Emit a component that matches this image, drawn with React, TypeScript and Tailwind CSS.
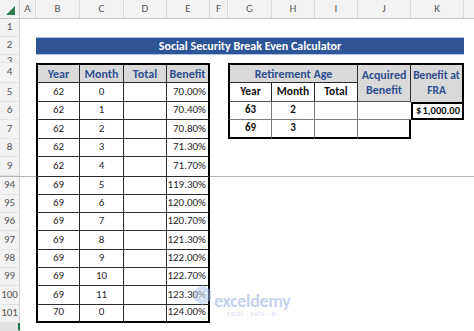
import type { ReactNode } from "react";

// column widths, matching the sheet's grid
const W = {
  A: "w-[16px]",
  B: "w-[44px]",
  C: "w-[44px]",
  D: "w-[43px]",
  E: "w-[43px]",
  F: "w-[18px]",
  G: "w-[44px]",
  H: "w-[43px]",
  I: "w-[43px]",
  J: "w-[53px]",
  K: "w-[53px]",
};

const HEAD_BG = "bg-[#d9d9d9]";
const HEAD_TEXT = "text-[#2f4f8f] font-bold";

type LeftRow = { year: number; month: number; benefit: string };

const topRows: LeftRow[] = [
  { year: 62, month: 1, benefit: "70.40%" },
  { year: 62, month: 2, benefit: "70.80%" },
  { year: 62, month: 3, benefit: "71.30%" },
  { year: 62, month: 4, benefit: "71.70%" },
];

const bottomRows: LeftRow[] = [
  { year: 69, month: 5, benefit: "119.30%" },
  { year: 69, month: 6, benefit: "120.00%" },
  { year: 69, month: 7, benefit: "120.70%" },
  { year: 69, month: 8, benefit: "121.30%" },
  { year: 69, month: 9, benefit: "122.00%" },
  { year: 69, month: 10, benefit: "122.70%" },
  { year: 69, month: 11, benefit: "123.30%" },
  { year: 70, month: 0, benefit: "124.00%" },
];

function RowHead({ n, active }: { n?: number; active?: boolean }) {
  return (
    <div
      className={`w-[20px] shrink-0 h-full flex items-center justify-center overflow-hidden border-b border-b-[#e2e2e2] text-[11px] text-[#555] ${
        active ? "bg-[#e1e1e1] border-r-2 border-r-[#217346]" : "bg-[#f3f3f3] border-r border-r-[#d0d0d0]"
      }`}
    >
      {n}
    </div>
  );
}

// one data row of the left table (columns B..E)
function LeftCells({ row, bottom }: { row: LeftRow; bottom: "thin" | "none" | "thick" }) {
  const b =
    bottom === "thin"
      ? "border-b border-b-[#2a2a2a]"
      : bottom === "thick"
        ? "border-b-2 border-b-black"
        : "";
  const base = `shrink-0 h-full flex items-center text-[11px] text-[#1f1f1f] ${b}`;
  return (
    <>
      <div className={`${W.B} ${base} justify-center border-l-2 border-l-black border-r border-r-[#2a2a2a]`}>
        {row.year}
      </div>
      <div className={`${W.C} ${base} justify-center border-r border-r-[#2a2a2a]`}>{row.month}</div>
      <div className={`${W.D} ${base} border-r border-r-[#2a2a2a]`} />
      <div className={`${W.E} ${base} justify-end pr-[2px] border-r-2 border-r-black`}>{row.benefit}</div>
    </>
  );
}

function Row({ h, children }: { h: string; children: ReactNode }) {
  return <div className={`flex shrink-0 ${h}`}>{children}</div>;
}

function Spacer({ w }: { w: string }) {
  return <div className={`${w} shrink-0 h-full`} />;
}

export default function App() {
  return (
    <div className="relative w-[474px] h-[331px] overflow-hidden bg-white flex flex-col font-[Carlito,Lato,sans-serif]">
      {/* column letters */}
      <div className="flex h-[19px] shrink-0 bg-[#f3f3f3] border-b border-b-[#c6c6c6] text-[11px] text-[#595959]">
        <div className="w-[20px] shrink-0 flex items-end justify-end pb-[3px] pr-[4px] border-r border-r-[#d0d0d0]">
          <svg width="9" height="9" viewBox="0 0 10 10">
            <polygon points="10,0 10,10 0,10" fill="#2e7d4f" />
          </svg>
        </div>
        {(["A", "B", "C", "D", "E", "F", "G", "H", "I", "J", "K"] as const).map((c) => (
          <div key={c} className={`${W[c]} shrink-0 flex items-center justify-center border-r border-r-[#dadada]`}>
            {c}
          </div>
        ))}
        <div className="flex-1" />
      </div>

      <Row h="h-[18px]">
        <RowHead n={1} />
      </Row>

      {/* title banner */}
      <Row h="h-[18px]">
        <RowHead n={2} />
        <Spacer w={W.A} />
        <div className="w-[428px] shrink-0 h-full flex items-center justify-center bg-[#2f5597] border-y border-y-[#a9c2e6] text-white font-bold text-[12px]">
          Social Security Break Even Calculator
        </div>
      </Row>

      <Row h="h-[8px]">
        <div className="w-[20px] shrink-0 h-full overflow-hidden bg-[#f3f3f3] border-r border-r-[#d0d0d0] border-b border-b-[#e2e2e2] text-[11px] leading-[11px] text-[#555] text-center">
          3
        </div>
      </Row>

      {/* rows 4 and 5: table headers, with merged J4:J5 and K4:K5 */}
      <div className="flex shrink-0">
        <div className="flex flex-col">
          <Row h="h-[20px]">
            <RowHead n={4} />
            <Spacer w={W.A} />
            {[
              { t: "Year", w: W.B, x: "border-l-2 border-l-black border-r border-r-[#2a2a2a]" },
              { t: "Month", w: W.C, x: "border-r border-r-[#2a2a2a]" },
              { t: "Total", w: W.D, x: "border-r border-r-[#2a2a2a]" },
              { t: "Benefit", w: W.E, x: "border-r-2 border-r-black" },
            ].map((c) => (
              <div
                key={c.t}
                className={`${c.w} shrink-0 h-full flex items-center justify-center ${HEAD_BG} ${HEAD_TEXT} text-[12px] border-t-2 border-t-black border-b border-b-[#2a2a2a] ${c.x}`}
              >
                {c.t}
              </div>
            ))}
            <Spacer w={W.F} />
            <div
              className={`w-[130px] shrink-0 h-full flex items-center justify-center ${HEAD_BG} ${HEAD_TEXT} text-[12px] border-t-2 border-t-black border-l-2 border-l-black border-r border-r-[#2a2a2a] border-b border-b-[#2a2a2a]`}
            >
              Retirement Age
            </div>
          </Row>
          <Row h="h-[18.5px]">
            <RowHead n={5} />
            <Spacer w={W.A} />
            <LeftCells row={{ year: 62, month: 0, benefit: "70.00%" }} bottom="thin" />
            <Spacer w={W.F} />
            <div className={`${W.G} shrink-0 h-full flex items-center justify-center font-bold text-[11.5px] text-[#111] border-l-2 border-l-black border-r border-r-[#2a2a2a] border-b border-b-[#555]`}>
              Year
            </div>
            <div className={`${W.H} shrink-0 h-full flex items-center justify-center font-bold text-[11.5px] text-[#111] border-r border-r-[#2a2a2a] border-b border-b-[#555]`}>
              Month
            </div>
            <div className={`${W.I} shrink-0 h-full flex items-center justify-center font-bold text-[11.5px] text-[#111] border-r border-r-[#2a2a2a] border-b border-b-[#555]`}>
              Total
            </div>
          </Row>
        </div>
        <div
          className={`${W.J} shrink-0 flex flex-col items-center justify-center leading-[15px] ${HEAD_BG} ${HEAD_TEXT} text-[12px] border-t-2 border-t-black border-r border-r-[#2a2a2a] border-b border-b-[#555]`}
        >
          <span>Acquired</span>
          <span>Benefit</span>
        </div>
        <div
          className={`${W.K} shrink-0 flex flex-col items-center justify-center leading-[15px] ${HEAD_BG} ${HEAD_TEXT} text-[11.5px] border-t-2 border-t-black border-r-2 border-r-black`}
        >
          <span>Benefit at</span>
          <span>FRA</span>
        </div>
      </div>

      {/* rows 6..9 */}
      {topRows.map((r, i) => (
        <Row key={i} h="h-[18.5px]">
          <RowHead n={6 + i} />
          <Spacer w={W.A} />
          <LeftCells row={r} bottom={i === 3 ? "none" : "thin"} />
          <Spacer w={W.F} />
          {i === 0 && (
            <>
              <div className={`${W.G} shrink-0 h-full flex items-center justify-center font-bold text-[11px] text-[#111] border-l-2 border-l-black border-r border-r-[#7a7a7a] border-b border-b-[#7a7a7a]`}>
                63
              </div>
              <div className={`${W.H} shrink-0 h-full flex items-center justify-center font-bold text-[11px] text-[#111] border-r border-r-[#7a7a7a] border-b border-b-[#7a7a7a]`}>
                2
              </div>
              <div className={`${W.I} shrink-0 h-full border-r border-r-[#7a7a7a] border-b border-b-[#7a7a7a]`} />
              <div className={`${W.J} shrink-0 h-full border-b border-b-[#7a7a7a]`} />
              <div className={`${W.K} shrink-0 h-full flex items-center justify-between pl-[3px] pr-[2px] font-bold text-[10.5px] text-[#111] border-2 border-black`}>
                <span>$</span>
                <span>1,000.00</span>
              </div>
            </>
          )}
          {i === 1 && (
            <>
              <div className={`${W.G} shrink-0 h-full flex items-center justify-center font-bold text-[11px] text-[#111] border-l-2 border-l-black border-r border-r-[#7a7a7a] border-b-2 border-b-black`}>
                69
              </div>
              <div className={`${W.H} shrink-0 h-full flex items-center justify-center font-bold text-[11px] text-[#111] border-r border-r-[#7a7a7a] border-b-2 border-b-black`}>
                3
              </div>
              <div className={`${W.I} shrink-0 h-full border-r border-r-[#7a7a7a] border-b-2 border-b-black`} />
              <div className={`${W.J} shrink-0 h-full border-r-2 border-r-black border-b-2 border-b-black`} />
            </>
          )}
        </Row>
      ))}

      {/* frozen pane split */}
      <div className="flex h-px shrink-0">
        <div className="w-[36px] bg-[#b4b4b4]" />
        <div className="w-[174px] bg-[#2a2a2a]" />
        <div className="flex-1 bg-[#b4b4b4]" />
      </div>

      {/* rows 94..101 */}
      {bottomRows.map((r, i) => (
        <Row key={i} h="h-[18.3px]">
          <RowHead n={94 + i} />
          <Spacer w={W.A} />
          <LeftCells row={r} bottom={i === bottomRows.length - 1 ? "thick" : "thin"} />
        </Row>
      ))}

      <div className="flex flex-1">
        <RowHead active />
      </div>

      {/* exceldemy watermark */}
      <div className="absolute left-[193px] top-[284px] flex items-start gap-[2px] opacity-50 pointer-events-none">
        <svg width="19" height="22" viewBox="0 0 19 22">
          <polygon points="9.5,1 18,6 18,16 9.5,21 1,16 1,6" fill="#a9bde8" />
          <polygon points="9.5,6 14,8.5 14,13.5 9.5,16 5,13.5 5,8.5" fill="#d6e0f5" />
        </svg>
        <div className="flex flex-col items-center">
          <span className="text-[18px] leading-[20px] font-semibold text-[#8fa6dc] tracking-[-0.3px] mt-[7px]">exceldemy</span>
          <span className="text-[5px] leading-[6px] tracking-[1px] text-[#9fb0d8]">EXCEL · DATA · BI</span>
        </div>
      </div>
    </div>
  );
}
